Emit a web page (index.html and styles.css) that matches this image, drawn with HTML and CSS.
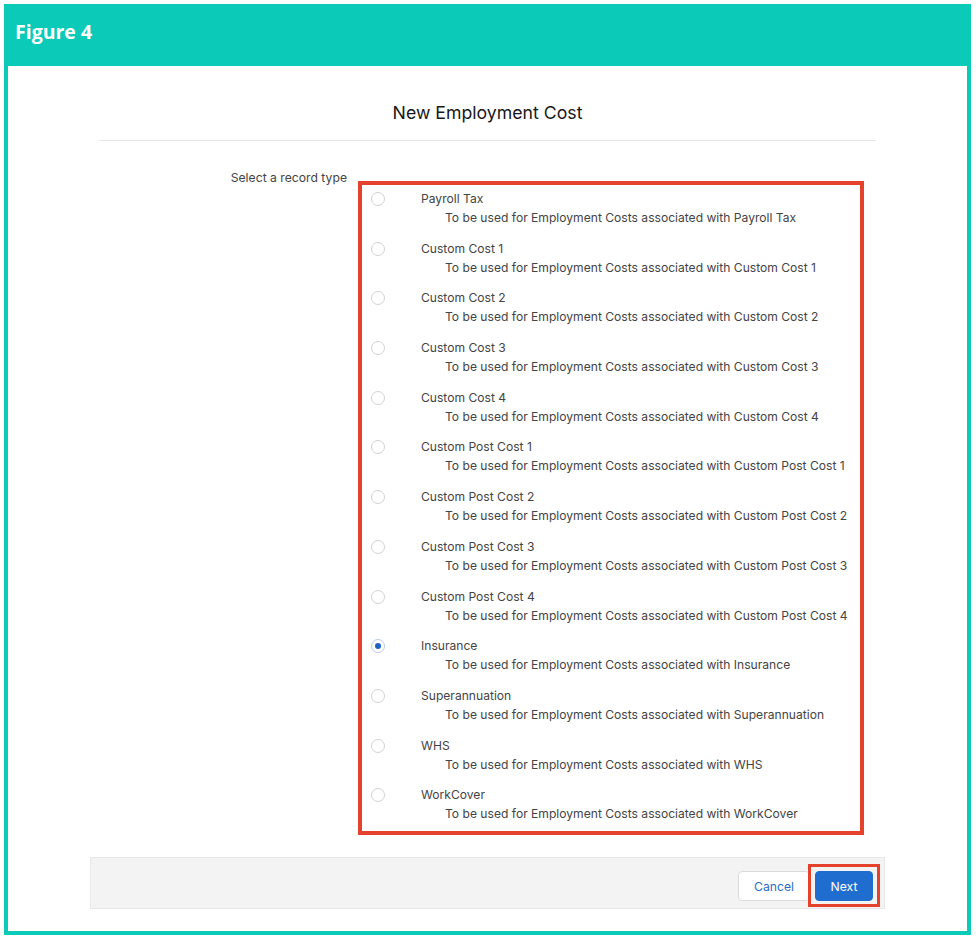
FILE: index.html
```html
<!DOCTYPE html>
<html>
<head>
<meta charset="utf-8">
<link rel="stylesheet" href="styles.css">
</head>
<body>
<div class="frame">
  <div class="fig-header">Figure 4</div>
  <div class="content">
    <div class="modal">
      <div class="modal-header"><h2 class="title">New Employment Cost</h2></div>
      <div class="modal-body">
        <div class="field-label">Select a record type</div>
        <div class="radio-group">
          <div class="row"><span class="radio"></span><div class="name">Payroll Tax</div><div class="desc">To be used for Employment Costs associated with Payroll Tax</div></div>
          <div class="row"><span class="radio"></span><div class="name">Custom Cost 1</div><div class="desc">To be used for Employment Costs associated with Custom Cost 1</div></div>
          <div class="row"><span class="radio"></span><div class="name">Custom Cost 2</div><div class="desc">To be used for Employment Costs associated with Custom Cost 2</div></div>
          <div class="row"><span class="radio"></span><div class="name">Custom Cost 3</div><div class="desc">To be used for Employment Costs associated with Custom Cost 3</div></div>
          <div class="row"><span class="radio"></span><div class="name">Custom Cost 4</div><div class="desc">To be used for Employment Costs associated with Custom Cost 4</div></div>
          <div class="row"><span class="radio"></span><div class="name">Custom Post Cost 1</div><div class="desc">To be used for Employment Costs associated with Custom Post Cost 1</div></div>
          <div class="row"><span class="radio"></span><div class="name">Custom Post Cost 2</div><div class="desc">To be used for Employment Costs associated with Custom Post Cost 2</div></div>
          <div class="row"><span class="radio"></span><div class="name">Custom Post Cost 3</div><div class="desc">To be used for Employment Costs associated with Custom Post Cost 3</div></div>
          <div class="row"><span class="radio"></span><div class="name">Custom Post Cost 4</div><div class="desc">To be used for Employment Costs associated with Custom Post Cost 4</div></div>
          <div class="row"><span class="radio checked"></span><div class="name">Insurance</div><div class="desc">To be used for Employment Costs associated with Insurance</div></div>
          <div class="row"><span class="radio"></span><div class="name">Superannuation</div><div class="desc">To be used for Employment Costs associated with Superannuation</div></div>
          <div class="row"><span class="radio"></span><div class="name">WHS</div><div class="desc">To be used for Employment Costs associated with WHS</div></div>
          <div class="row"><span class="radio"></span><div class="name">WorkCover</div><div class="desc">To be used for Employment Costs associated with WorkCover</div></div>
        </div>
      </div>
      <div class="modal-footer">
        <button class="btn btn-neutral">Cancel</button>
        <span class="highlight"><button class="btn btn-brand">Next</button></span>
      </div>
    </div>
  </div>
</div>
</body>
</html>
```
FILE: styles.css
```css
* { box-sizing: border-box; }
html, body { margin: 0; padding: 0; background: #fff; }
body { font-family: "Inter", "Liberation Sans", sans-serif; }

.frame {
  margin: 4px 0 0 4px;
  width: 967px;
  background: #0bcab8;
  padding: 0 4px 4px;
}
.fig-header {
  height: 62px;
  padding: 16px 0 0 7px;
  color: #fff;
  font-family: "Open Sans", sans-serif;
  font-weight: 700;
  font-size: 19.5px;
  line-height: 24px;
}
.content {
  background: #fff;
  height: 865px;
  padding-left: 82px;
}
.modal { width: 795px; }
.modal-header {
  margin: 0 9px;
  padding: 35px 0 15px;
  border-bottom: 1px solid #e5e5e5;
  text-align: center;
}
.title {
  margin: 0;
  font-size: 17.7px;
  line-height: 24px;
  font-weight: 400;
  color: #181818;
}
.modal-body {
  display: grid;
  grid-template-columns: 257px 506px;
  column-gap: 11px;
  padding-top: 27px;
  height: 716px;
}
.field-label {
  text-align: right;
  font-size: 12.2px;
  line-height: 19px;
  color: #444444;
  white-space: nowrap;
}
.radio-group {
  margin-top: 13px;
  border: 4px solid #e4422c;
  padding: 4px 0 7.5px;
  align-self: start;
}
.row {
  position: relative;
  padding-left: 59px;
  margin-bottom: 11.7px;
  font-size: 12.1px;
  line-height: 19px;
  color: #444444;
  white-space: nowrap;
}
.row:last-child { margin-bottom: 0; }
.desc { padding-left: 24px; }
.radio {
  position: absolute;
  left: 9px;
  top: 3px;
  width: 14px;
  height: 14px;
  border: 1px solid #d2d2d2;
  border-radius: 50%;
  background: #fff;
}
.radio.checked { border-color: #b8cbe8; }
.radio.checked::after {
  content: "";
  position: absolute;
  left: 3px;
  top: 3px;
  width: 6px;
  height: 6px;
  border-radius: 50%;
  background: #1e62c8;
}
.modal-footer {
  height: 52px;
  background: #f3f3f3;
  border: 1px solid #e8e8e8;
  display: flex;
  justify-content: flex-end;
  align-items: flex-start;
  gap: 5px;
  padding: 13px 11px 0 0;
}
.btn {
  height: 30px;
  border-radius: 4px;
  font-family: "Inter", "Liberation Sans", sans-serif;
  font-size: 12.2px;
  padding: 0;
  cursor: pointer;
}
.btn-neutral {
  width: 72px;
  background: #fff;
  border: 1px solid #dddbda;
  color: #2a6dc9;
}
.btn-brand {
  width: 58px;
  background: #1f6ecf;
  border: 1px solid #1f6ecf;
  color: #fff;
  display: block;
}
.highlight {
  position: relative;
  display: block;
}
.highlight::after {
  content: "";
  position: absolute;
  left: -7px;
  top: -7px;
  right: -7px;
  bottom: -6px;
  border: 3px solid #e4422c;
}
```
